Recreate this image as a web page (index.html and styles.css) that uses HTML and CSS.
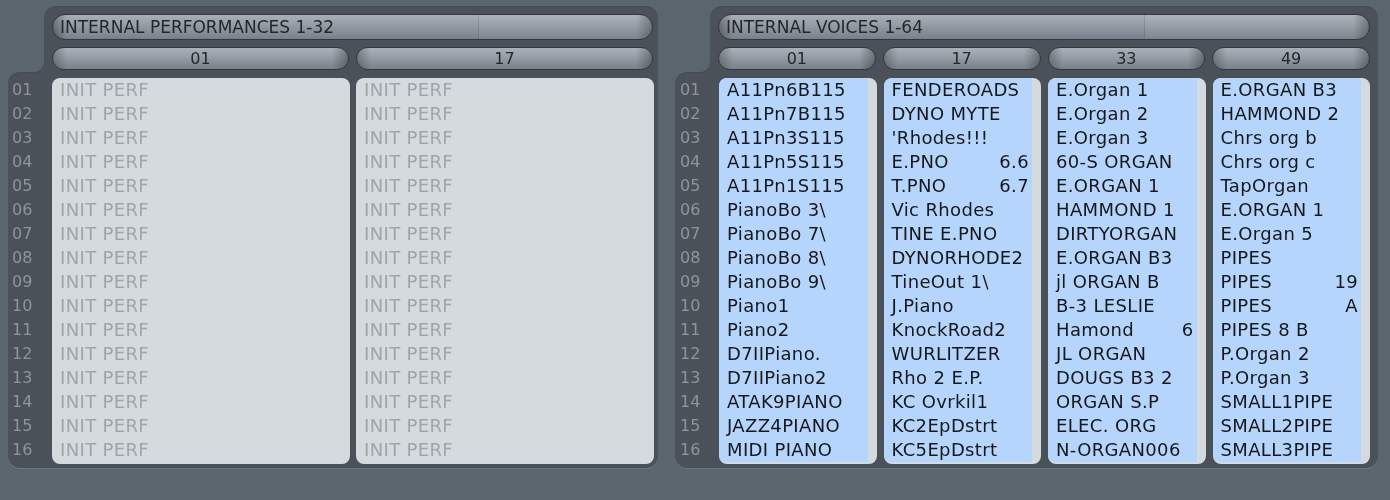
FILE: index.html
```html
<!DOCTYPE html>
<html lang="en">
<head>
  <meta charset="UTF-8">
  <title>Internal Banks</title>
  <link rel="stylesheet" href="styles.css">
</head>
<body>

<!-- performances -->
<div class="panel perf">
  <div class="panel-head">
    <div class="title">INTERNAL PERFORMANCES 1-32</div>
    <div class="col-heads">
      <div class="pill">01</div>
      <div class="pill">17</div>
    </div>
  </div>
  <div class="panel-body">
    <ul class="rownums">
      <li>01</li><li>02</li><li>03</li><li>04</li><li>05</li><li>06</li><li>07</li><li>08</li>
      <li>09</li><li>10</li><li>11</li><li>12</li><li>13</li><li>14</li><li>15</li><li>16</li>
    </ul>
    <div class="lists">
      <ul class="list">
        <li>INIT PERF</li><li>INIT PERF</li><li>INIT PERF</li><li>INIT PERF</li>
        <li>INIT PERF</li><li>INIT PERF</li><li>INIT PERF</li><li>INIT PERF</li>
        <li>INIT PERF</li><li>INIT PERF</li><li>INIT PERF</li><li>INIT PERF</li>
        <li>INIT PERF</li><li>INIT PERF</li><li>INIT PERF</li><li>INIT PERF</li>
      </ul>
      <ul class="list">
        <li>INIT PERF</li><li>INIT PERF</li><li>INIT PERF</li><li>INIT PERF</li>
        <li>INIT PERF</li><li>INIT PERF</li><li>INIT PERF</li><li>INIT PERF</li>
        <li>INIT PERF</li><li>INIT PERF</li><li>INIT PERF</li><li>INIT PERF</li>
        <li>INIT PERF</li><li>INIT PERF</li><li>INIT PERF</li><li>INIT PERF</li>
      </ul>
    </div>
  </div>
</div>

<!-- voices -->
<div class="panel voices">
  <div class="panel-head">
    <div class="title">INTERNAL VOICES 1-64</div>
    <div class="col-heads">
      <div class="pill">01</div>
      <div class="pill">17</div>
      <div class="pill">33</div>
      <div class="pill">49</div>
    </div>
  </div>
  <div class="panel-body">
    <ul class="rownums">
      <li>01</li><li>02</li><li>03</li><li>04</li><li>05</li><li>06</li><li>07</li><li>08</li>
      <li>09</li><li>10</li><li>11</li><li>12</li><li>13</li><li>14</li><li>15</li><li>16</li>
    </ul>
    <div class="lists">
      <ul class="list">
        <li>A11Pn6B115</li>
        <li>A11Pn7B115</li>
        <li>A11Pn3S115</li>
        <li>A11Pn5S115</li>
        <li>A11Pn1S115</li>
        <li>PianoBo 3\</li>
        <li>PianoBo 7\</li>
        <li>PianoBo 8\</li>
        <li>PianoBo 9\</li>
        <li>Piano1</li>
        <li>Piano2</li>
        <li>D7IIPiano.</li>
        <li>D7IIPiano2</li>
        <li>ATAK9PIANO</li>
        <li>JAZZ4PIANO</li>
        <li>MIDI PIANO</li>
      </ul>
      <ul class="list">
        <li>FENDEROADS</li>
        <li>DYNO MYTE</li>
        <li>'Rhodes!!!</li>
        <li class="split"><span>E.PNO</span><span>6.6</span></li>
        <li class="split"><span>T.PNO</span><span>6.7</span></li>
        <li>Vic Rhodes</li>
        <li>TINE E.PNO</li>
        <li>DYNORHODE2</li>
        <li>TineOut 1\</li>
        <li>J.Piano</li>
        <li>KnockRoad2</li>
        <li>WURLITZER</li>
        <li>Rho 2 E.P.</li>
        <li>KC Ovrkil1</li>
        <li>KC2EpDstrt</li>
        <li>KC5EpDstrt</li>
      </ul>
      <ul class="list">
        <li>E.Organ 1</li>
        <li>E.Organ 2</li>
        <li>E.Organ 3</li>
        <li>60-S ORGAN</li>
        <li>E.ORGAN 1</li>
        <li>HAMMOND 1</li>
        <li>DIRTYORGAN</li>
        <li>E.ORGAN B3</li>
        <li>jl ORGAN B</li>
        <li>B-3 LESLIE</li>
        <li class="split"><span>Hamond</span><span>6</span></li>
        <li>JL ORGAN</li>
        <li>DOUGS B3 2</li>
        <li>ORGAN S.P</li>
        <li>ELEC. ORG</li>
        <li>N-ORGAN006</li>
      </ul>
      <ul class="list">
        <li>E.ORGAN B3</li>
        <li>HAMMOND 2</li>
        <li>Chrs org b</li>
        <li>Chrs org c</li>
        <li>TapOrgan</li>
        <li>E.ORGAN 1</li>
        <li>E.Organ 5</li>
        <li>PIPES</li>
        <li class="split"><span>PIPES</span><span>19</span></li>
        <li class="split"><span>PIPES</span><span>A</span></li>
        <li>PIPES 8 B</li>
        <li>P.Organ 2</li>
        <li>P.Organ 3</li>
        <li>SMALL1PIPE</li>
        <li>SMALL2PIPE</li>
        <li>SMALL3PIPE</li>
      </ul>
    </div>
  </div>
</div>

</body>
</html>
```

FILE: styles.css
```css
body {
  margin: 0;
  padding: 7px 8px;
  height: 500px;
  box-sizing: border-box;
  overflow: hidden;
  display: flex;
  gap: 17px;
  background: #5b656e;
  font-family: "DejaVu Sans", Verdana, sans-serif;
}

ul {
  list-style: none;
  margin: 0;
  padding: 0;
}

/* frame */
.panel {
  display: flex;
  flex-direction: column;
  filter: drop-shadow(0 1px 0 rgba(255, 255, 255, 0.12)) drop-shadow(0 -1px 0 rgba(0, 0, 0, 0.25));
}
.perf { width: 650px; }
.voices { width: 703px; }

.panel-head {
  background: #4a5159;
  border-radius: 12px 12px 0 0;
  margin-left: 36px;
  padding: 7px 5px 3px 8px;
}
.voices .panel-head {
  margin-left: 35px;
  padding-right: 8px;
}

/* pills */
.title, .pill {
  box-sizing: border-box;
  border: 1px solid #31373d;
  color: #23272b;
  background:
    linear-gradient(to right, rgba(0,0,0,0.25), rgba(0,0,0,0) 14px, rgba(0,0,0,0) calc(100% - 16px), rgba(0,0,0,0.3)),
    linear-gradient(#a9b0b7, #97a0a8 40%, #858e97 75%, #7a838c);
}
.title {
  height: 26px;
  border-radius: 13px;
  padding-left: 7px;
  font-size: 17px;
  line-height: 24px;
  background:
    linear-gradient(to right, rgba(0,0,0,0) 425px, rgba(0,0,0,0.12) 425px, rgba(0,0,0,0.12) 426px, rgba(255,255,255,0.04) 426px),
    linear-gradient(to right, rgba(0,0,0,0.3), rgba(0,0,0,0) 14px, rgba(0,0,0,0) calc(100% - 16px), rgba(0,0,0,0.3)),
    linear-gradient(#a8afb6, #959ea6 40%, #848d97 75%, #78818a);
}
.col-heads {
  display: grid;
  grid-template-columns: repeat(2, 1fr);
  gap: 7px;
  margin-top: 7px;
}
.voices .col-heads { grid-template-columns: repeat(4, 1fr); }
.pill {
  height: 23px;
  border-radius: 12px;
  text-align: center;
  font-size: 16px;
  line-height: 21px;
}

/* body: row numbers + lists */
.panel-body {
  position: relative;
  display: flex;
  background: #4a5159;
  border-radius: 12px 0 12px 12px;
  padding: 5px 4px 4px 0;
}
.voices .panel-body { padding-right: 8px; }

/* inner rounded corner where head meets body */
.panel-body::before {
  content: "";
  position: absolute;
  left: 26px;
  top: -10px;
  width: 10px;
  height: 10px;
  background: radial-gradient(circle at 0 0, transparent 9.5px, #4a5159 10.5px);
}
.voices .panel-body::before { left: 25px; }

.rownums {
  width: 44px;
  flex: none;
  box-sizing: border-box;
  padding-left: 4px;
  color: #8e959c;
  font-size: 16px;
  line-height: 24px;
}
.voices .rownums {
  padding-left: 5px;
}

.lists {
  flex: 1;
  display: grid;
  grid-template-columns: repeat(2, 1fr);
  gap: 6px;
}
.voices .lists {
  grid-template-columns: repeat(4, 1fr);
  gap: 7px;
}

.list {
  height: 386px;
  background: #d5dadf;
  border-radius: 8px;
  overflow: hidden;
}
.list li {
  height: 24px;
  line-height: 24px;
  padding-left: 8px;
  font-size: 18px;
  letter-spacing: 0.35px;
  white-space: nowrap;
}
.perf .list li { color: #a2a4a6; }

.voices .list li {
  color: #16181a;
  background: #b6d5fd;
  margin-right: 9px;
}
.voices .list li:first-child { border-top-left-radius: 7px; }
.voices .list li:last-child { border-bottom-left-radius: 7px; }
.voices .list li.split {
  display: flex;
  justify-content: space-between;
  padding-right: 3px;
}
```
